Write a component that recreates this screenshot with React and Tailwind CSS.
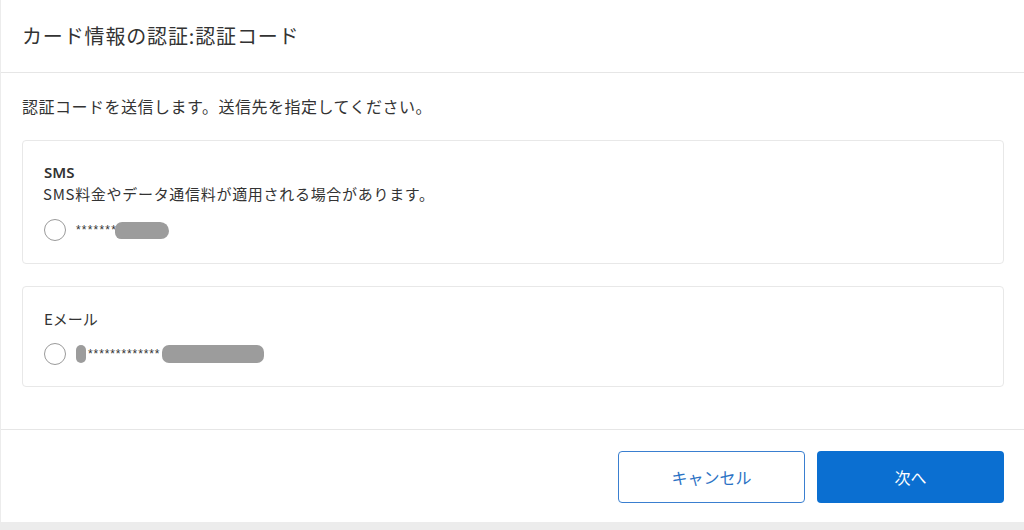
import React from "react";

const jp = { fontFamily: '"Noto Sans CJK JP", "Noto Sans", sans-serif' };

function Radio() {
  return <span className="block w-[22px] h-[22px] rounded-full border border-[#9a9a9a] bg-white shrink-0" />;
}

export default function App() {
  return (
    <div className="w-[1024px] h-[530px] bg-[#ececec] overflow-hidden" style={jp}>
      <div className="h-[522px] bg-white border-l border-[#ececec] flex flex-col text-[#333]">
        <div className="h-[73px] border-b border-[#e6e6e6] flex items-center px-[21px]">
          <h1 className="text-[20px] tracking-[0.85px] leading-none text-[#333]">カード情報の認証:認証コード</h1>
        </div>
        <div className="flex-1 px-[21px] pt-[21px] flex flex-col">
          <p className="text-[16px] leading-[24px] tracking-[0.5px] mb-[22px]">認証コードを送信します。送信先を指定してください。</p>
          <div className="w-[982px] h-[124px] border border-[#e8e8e8] rounded-[4px] px-[21px] pt-[21px] flex flex-col">
            <div className="text-[15px] leading-[20px] font-semibold" style={{ fontFamily: '"Noto Sans", "Liberation Sans", sans-serif' }}>SMS</div>
            <div className="text-[15px] leading-[24px] tracking-[0.7px] -ml-[1px]">SMS料金やデータ通信料が適用される場合があります。</div>
            <div className="flex items-center mt-[13px]">
              <Radio />
              <span className="ml-[10px] text-[12px] tracking-[1.2px]" style={{ fontFamily: '"Liberation Sans", sans-serif' }}>*******</span>
              <span className="block shrink-0 w-[54px] h-[17px] bg-[#9c9c9c] rounded-[8px_10px_9px_7px] -ml-[2px]" />
            </div>
          </div>
          <div className="w-[982px] h-[101px] mt-[22px] border border-[#e8e8e8] rounded-[4px] px-[21px] pt-[21px] flex flex-col">
            <div className="text-[15px] leading-[22px]">Eメール</div>
            <div className="flex items-center mt-[13px]">
              <Radio />
              <span className="block shrink-0 w-[10px] h-[18px] bg-[#9c9c9c] rounded-[5px] ml-[10px]" />
              <span className="ml-[2px] text-[12px] tracking-[0.9px]" style={{ fontFamily: '"Liberation Sans", sans-serif' }}>*************</span>
              <span className="block shrink-0 w-[102px] h-[18px] bg-[#9c9c9c] rounded-[7px] ml-[2px]" />
            </div>
          </div>
        </div>
        <div className="h-[93px] border-t border-[#e6e6e6] flex justify-end items-start pt-[21px] pr-[20px] gap-[12px]">
          <button className="w-[187px] h-[52px] border border-[#3a7fd0] rounded-[4px] bg-white text-[#2b72c4] text-[16px]">キャンセル</button>
          <button className="w-[187px] h-[52px] rounded-[4px] bg-[#0b6fd1] text-white text-[16px]">次へ</button>
        </div>
      </div>
    </div>
  );
}
